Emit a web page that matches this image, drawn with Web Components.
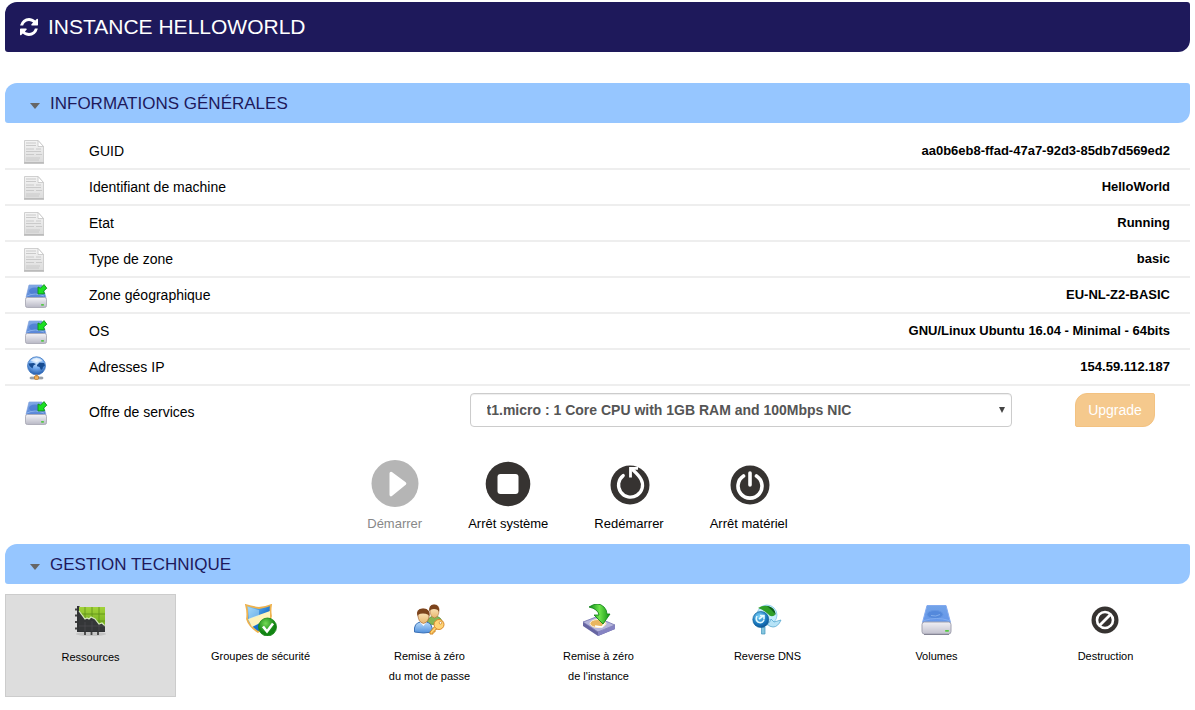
<!DOCTYPE html>
<html lang="fr">
<head>
<meta charset="utf-8">
<title>Instance HelloWorld</title>
<style>
  body {
    margin: 2px 5px 0;
    background: #fff;
    color: #000;
    font-family: "Liberation Sans", Arial, sans-serif;
    font-size: 14px;
  }
</style>
</head>
<body>

<instance-header>INSTANCE HELLOWORLD</instance-header>

<panel-section heading="INFORMATIONS GÉNÉRALES">
  <info-table></info-table>
  <service-offer></service-offer>
  <action-bar>
    <action-button icon="play" disabled>Démarrer</action-button>
    <action-button icon="stop">Arrêt système</action-button>
    <action-button icon="restart">Redémarrer</action-button>
    <action-button icon="power">Arrêt matériel</action-button>
  </action-bar>
</panel-section>

<panel-section heading="GESTION TECHNIQUE">
  <tool-bar>
    <tool-link icon="chart" selected>Ressources</tool-link>
    <tool-link icon="shield">Groupes de sécurité</tool-link>
    <tool-link icon="users">Remise à zéro<br>du mot de passe</tool-link>
    <tool-link icon="reset">Remise à zéro<br>de l'instance</tool-link>
    <tool-link icon="dns">Reverse DNS</tool-link>
    <tool-link icon="volume">Volumes</tool-link>
    <tool-link icon="ban">Destruction</tool-link>
  </tool-bar>
</panel-section>

<script>
// each icon: [width, height, viewBox, markup]
const ICONS = {
  refresh: [18, 18, "0 0 1536 1536", `
    <path fill="#fff" d="M1511 928q0 5-1 7-64 268-268 434.5t-478 166.5q-146 0-282.5-55t-243.5-157l-129 129q-19 19-45 19t-45-19-19-45v-448q0-26 19-45t45-19h448q26 0 45 19t19 45-19 45l-137 137q71 66 161 102t187 36q134 0 250-65t186-179q11-17 53-117 8-23 30-23h192q13 0 22.5 9.5t9.5 22.5zm25-800v448q0 26-19 45t-45 19h-448q-26 0-45-19t-19-45 19-45l138-138q-148-137-349-137-134 0-250 65t-186 179q-11 17-53 117-8 23-30 23h-199q-13 0-22.5-9.5t-9.5-22.5v-7q65-268 270-434.5t480-166.5q146 0 284 55.5t245 156.5l130-129q19-19 45-19t45 19 19 45z"/>`],

  doc: [24, 24, "0 0 24 24", `
    <linearGradient id="a" x2="0" y2="1"><stop stop-color="#f4f4f4"/><stop offset="1" stop-color="#dcdcdc"/></linearGradient>
    <path d="M.5.500H14l5.500 6V22.500H.5z" fill="url(#a)" stroke="#d0d0d0"/>
    <path d="M0 23h20" stroke="#b4b4b4" stroke-width="1.500"/>
    <path d="M14 .5v6h5.500z" fill="#fff" stroke="#c4c4c4" stroke-width=".8"/>
    <path d="M2 3h10M2 5.500h10M2 9h8M12 9h5M2 11.500h15M2 14.500h8M12 14.500h6M2 18h14M2 20h13" stroke="#cacaca" stroke-width="1.200"/>`],

  drive: [24, 24, "0 0 24 24", `
    <linearGradient id="a" x2="0" y2="1"><stop stop-color="#82aae6"/><stop offset="1" stop-color="#5785d6"/></linearGradient>
    <linearGradient id="b" x2="0" y2="1"><stop stop-color="#f4f4f8"/><stop offset="1" stop-color="#b8b8c5"/></linearGradient>
    <path d="M5 1h13l4 12.500H2z" fill="url(#a)" stroke="#7fa0dc" stroke-width=".7"/>
    <ellipse cx="11" cy="7" rx="6" ry="3.500" fill="#4478cf" opacity=".7"/>
    <path d="M3 12q8-4 17 0" stroke="#8bb4ed" fill="none"/>
    <rect x="1.500" y="13.500" width="21" height="10" rx="1.800" fill="url(#b)" stroke="#a3a3b0" stroke-width=".8"/>
    <rect x="17" y="20" width="3" height="1.800" rx=".8" fill="#55c848"/>
    <path d="M14 3l2.500 1.200L20 .6l2.800 3.600-3.300 3 1.200 2.500-6.700.300z" fill="#1be022" stroke="#109318" stroke-width=".9" stroke-linejoin="round"/>`],

  globe: [24, 24, "0 0 24 24", `
    <radialGradient id="a" cx=".5" cy=".25" r=".8"><stop stop-color="#e3f2ff"/><stop offset=".5" stop-color="#71aaef"/><stop offset="1" stop-color="#174d9e"/></radialGradient>
    <circle cx="12.500" cy="9.800" r="9" fill="url(#a)" stroke="#3c75c0" stroke-width=".8"/>
    <path d="M4.500 7.500l5-.5 2.500 1-2.500 1.500-1 3-3-2.500zM13 9l2.500-2.500 4.500.5 1 2.500-2 1.500-.5 2-1.500 1-1.500-3-2.500-.8z" fill="#174c92"/>
    <path d="M6.500 4.500q6-5 12 0-6 2.500-12 0" fill="#fff" opacity=".6"/>
    <path d="M12.500 18.500v3" stroke="#b28763" stroke-width="2"/>
    <rect x="6" y="21" width="13" height="2" rx="1" fill="#a6adb6" stroke="#7a828c" stroke-width=".6"/>
    <rect x="10.500" y="19.800" width="4" height="3.600" rx="1" fill="#f2b259" stroke="#b86e20" stroke-width=".7"/>`],

  play: [48, 48, "0 0 48 48", `
    <circle cx="24" cy="23.500" r="23.500" fill="#b5b5b5"/>
    <path d="M20 13.200L33.800 23.500 20 34.800z" fill="#fff" stroke="#fff" stroke-width="3" stroke-linejoin="round"/>`],

  stop: [48, 48, "0 0 48 48", `
    <circle cx="24" cy="24" r="22.300" fill="#363331"/>
    <rect x="13.500" y="14" width="21" height="20" rx="3" fill="#fff"/>`],

  restart: [48, 48, "0 0 48 48", `
    <circle cx="25" cy="25" r="19.500" fill="#363331"/>
    <path d="M18.200 15.600A12 12 0 1 0 36 19.200Q34 15.500 28 10" fill="none" stroke="#fff" stroke-width="3.300" stroke-linecap="round"/>
    <path d="M25.500 17.500V8.300H33" fill="none" stroke="#fff" stroke-width="2.800"/>`],

  power: [48, 48, "0 0 48 48", `
    <circle cx="25" cy="25" r="19.500" fill="#363331"/>
    <path d="M18.500 16A12 12 0 1 0 31.500 16M25 13v12" fill="none" stroke="#fff" stroke-width="3.600" stroke-linecap="round"/>`],

  chart: [32, 32, "0 0 32 32", `
    <linearGradient id="a" x2="0" y2="1"><stop stop-color="#a2d33a"/><stop offset="1" stop-color="#67a315"/></linearGradient>
    <ellipse cx="16" cy="29" rx="15" ry="2" fill="#c4c4c4"/>
    <path d="M0 4.500h4M0 10.500h4M0 17h4M0 23.500h4M10 27v3M16.500 27v3M23 27v3" stroke="#444" stroke-width="1.800"/>
    <path d="M2 1h2l1 1h25v25H2z" fill="#303234"/>
    <path d="M4 2h26v24H4z" fill="url(#a)"/>
    <path d="M10 2v24M17 2v24M24 2v24M4 9h26M4 16h26" stroke="#5d8f18" stroke-width=".8"/>
    <path d="M4 6l6 8 2-1 2 1 2-2 4 2 4 5 3-1 3 3v5H4z" fill="#343638"/>
    <path d="M4 6l6 8 2-1 2 1 2-2 4 2 4 5 3-1 3 3" fill="none" stroke="#d5e9bd" stroke-width="1.200"/>
    <path d="M10 17v9M17 16v10M24 20v6M4 21h26" stroke="#505254" stroke-width=".6"/>`],

  shield: [32, 32, "0 0 32 32", `
    <linearGradient id="a" x2="1" y2="1"><stop stop-color="#8fd2fc"/><stop offset=".6" stop-color="#1771cd"/></linearGradient>
    <radialGradient id="b" cx=".4" cy=".3"><stop stop-color="#75da55"/><stop offset="1" stop-color="#118413"/></radialGradient>
    <path d="M1 1q6 2 13 3Q21 3 26 1q-1 6 0 11Q24 24 13 28 4 22 2 15 3 8 1 1z" fill="url(#a)" stroke="#eeb24e" stroke-width="1.800"/>
    <path d="M3 15L25 7v7L7 23z" fill="#fff3ba"/>
    <path d="M3 3q7 2 11 3v6L4 15z" fill="#c8edff" opacity=".45"/>
    <circle cx="22.500" cy="23" r="9" fill="url(#b)" stroke="#168714" stroke-width=".8"/>
    <path d="M18 22.500l4 5 6-8" fill="none" stroke="#fff" stroke-width="2.600"/>`],

  users: [32, 32, "0 0 32 32", `
    <linearGradient id="a" x2="0" y2="1"><stop stop-color="#fff0cf"/><stop offset="1" stop-color="#e8b66d"/></linearGradient>
    <linearGradient id="b" x2="0" y2="1"><stop stop-color="#b9dcfb"/><stop offset="1" stop-color="#5190dc"/></linearGradient>
    <path d="M13 20q0-7 7-8 8 0 9 9z" fill="#86b554" stroke="#51862c" stroke-width=".8"/>
    <path d="M16 6q0-5 4.500-5T25 6q0 7-4.500 8Q16 13 16 6z" fill="url(#a)" stroke="#a96c37" stroke-width=".6"/>
    <path d="M15.500 8Q14 .5 20 .5T25 8q-1-3-5-3t-4.500 3z" fill="#7b431c"/>
    <path d="M.500 28q-1-9 6-10h6q6 1 6 10-9 2-18 0z" fill="url(#b)" stroke="#3d72b6"/>
    <path d="M6 18l3.500 4 3-4z" fill="#fff"/>
    <path d="M4 11q0-6 5.500-6T15 11q0 7-5.500 8.500Q4 18 4 11z" fill="url(#a)" stroke="#a96c37" stroke-width=".7"/>
    <path d="M3.500 13Q1 4.500 9 4.500T15.500 13Q15 9.500 9 9.500T3.500 13z" fill="#7b431c"/>
    <path d="M21 22l-5 6v2h3v-2h2v-2l4-2" fill="#ffd16f" stroke="#d28725"/>
    <circle cx="25" cy="20.500" r="5" fill="#ffd475" stroke="#d9882b"/>
    <circle cx="26.500" cy="18.800" r="1.300" fill="#fff" stroke="#c47a20" stroke-width=".7"/>`],

  reset: [32, 32, "0 0 32 32", `
    <linearGradient id="a" x2="1"><stop stop-color="#0c8c17"/><stop offset=".5" stop-color="#6de34b"/><stop offset="1" stop-color="#119113"/></linearGradient>
    <path d="M0 18v4l15 10 17-7v-4L18 28z" fill="#6665a2"/>
    <path d="M0 18l13-5 19 8-17 7z" fill="#b5b5dc" stroke="#7373ad" stroke-width=".8"/>
    <path d="M15 28v4l17-7v-4z" fill="#8583c2"/>
    <ellipse cx="15" cy="19.500" rx="8" ry="4" fill="#e9b65f" stroke="#fff0cc"/>
    <path d="M12 22l7 1 3-4" fill="none" stroke="#fff" stroke-width="1.500"/>
    <path d="M6 3Q15-3 21 3q3 3 3 7h3l-7 10-9-9h5Q15 5 6 3z" fill="url(#a)" stroke="#087d10" stroke-width=".8"/>`],

  dns: [32, 32, "0 0 32 32", `
    <radialGradient id="a" cx=".4" cy=".3" r=".8"><stop stop-color="#7dd4fb"/><stop offset=".6" stop-color="#1978be"/><stop offset="1" stop-color="#07498a"/></radialGradient>
    <circle cx="15" cy="11" r="10" fill="#c5edfd" stroke="#74bfe4" stroke-width=".7"/>
    <path d="M6 4q5-3 10-2 7 2 7 9-4 3-7-1-4-4-10-6z" fill="#2f9f28"/>
    <path d="M15 2q8 1 9 9-4-5-9-9z" fill="#0c5f1d"/>
    <path d="M15 20q3-1 4-5l3 3 7-2q-3 7-8 7-3 0-6-3z" fill="#b6e3f7" stroke="#58a8d0" stroke-width=".8"/>
    <path d="M9.500 23h3.500v7H9.500z" fill="#86c6df" stroke="#4094bb" stroke-width=".7"/>
    <circle cx="8.800" cy="15.500" r="8" fill="url(#a)" stroke="#136298" stroke-width=".7"/>
    <path d="M5 12q-2 4 1 6 4 2 6-2M7 15l4-3M8 11.500h4v4" fill="none" stroke="#e3faff" stroke-width="1.600"/>`],

  volume: [32, 32, "0 0 32 32", `
    <linearGradient id="a" x2="0" y2="1"><stop stop-color="#72a3e8"/><stop offset="1" stop-color="#6596ea"/></linearGradient>
    <linearGradient id="b" x2="0" y2="1"><stop stop-color="#f1f0f5"/><stop offset="1" stop-color="#c1c0cd"/></linearGradient>
    <path d="M6 1.500h19l4.500 17H1.500z" fill="url(#a)" stroke="#83aaf0"/>
    <ellipse cx="14" cy="10.500" rx="8" ry="4" fill="#5489dc" stroke="#6496e2"/>
    <path d="M10 11.500q5 1.500 9-1" stroke="#82adeb" fill="none"/>
    <path d="M3 16.500q13-4 25 0" stroke="#82aef0" fill="none"/>
    <rect x="1" y="18" width="29" height="12" rx="2.500" fill="url(#b)" stroke="#a2a2b0"/>
    <path d="M3 30.500h25" stroke="#858594"/>
    <rect x="24" y="26" width="4" height="1.800" rx=".8" fill="#55ca42"/>`],

  ban: [32, 32, "0 0 32 32", `
    <circle cx="15" cy="16" r="13.500" fill="#363331"/>
    <circle cx="15" cy="16" r="8" fill="none" stroke="#fff" stroke-width="2.600"/>
    <path d="M9.500 21.500l11-11" stroke="#fff" stroke-width="2.800"/>`]
};

class AppIcon extends HTMLElement {
  connectedCallback() {
    const shadow = this.attachShadow({ mode: "open" });
    const [width, height, viewBox, markup] = ICONS[this.getAttribute("name")];

    shadow.innerHTML = `
      <style>
        :host { display: block; flex: none; }
        svg { display: block; }
      </style>
      <svg width="${width}" height="${height}" viewBox="${viewBox}" aria-hidden="true">${markup}</svg>
    `;
  }
}
customElements.define("app-icon", AppIcon);

class InstanceHeader extends HTMLElement {
  connectedCallback() {
    const shadow = this.attachShadow({ mode: "open" });

    shadow.innerHTML = `
      <style>
        :host {
          display: flex;
          align-items: center;
          gap: 10px;
          height: 50px;
          padding: 0 15px;
          margin-bottom: 31px;
          background: #1e195b;
          border-radius: 12px 3px 12px 3px;
          color: #fff;
        }
        button { padding: 0; border: 0; background: none; cursor: pointer; }
        h1 { margin: 0; font-size: 21px; font-weight: normal; line-height: 24px; }
      </style>
      <button type="button" aria-label="Actualiser"><app-icon name="refresh"></app-icon></button>
      <h1><slot></slot></h1>
    `;
  }
}
customElements.define("instance-header", InstanceHeader);

class PanelSection extends HTMLElement {
  connectedCallback() {
    const shadow = this.attachShadow({ mode: "open" });

    shadow.innerHTML = `
      <style>
        :host { display: block; }
        h2 { margin: 0; font-size: 17px; font-weight: normal; }
        button {
          display: flex;
          align-items: center;
          gap: 10px;
          width: 100%;
          height: 40px;
          padding: 2px 25px 0;
          border: 0;
          background: #96c6ff;
          border-radius: 12px 3px 12px 3px;
          color: #1e195b;
          font: inherit;
          text-align: left;
          cursor: pointer;
        }
        .caret {
          margin-top: 4px;
          border: 5px solid transparent;
          border-top: 6px solid #666;
          border-bottom: 0;
        }
        .content { padding-top: 10px; }
      </style>
      <h2><button type="button" aria-expanded="true"><span class="caret"></span>${this.getAttribute("heading")}</button></h2>
      <div class="content"><slot></slot></div>
    `;

    // fold / unfold the panel
    const button = shadow.querySelector("button");
    button.addEventListener("click", () => {
      const content = shadow.querySelector(".content");
      content.hidden = !content.hidden;
      button.setAttribute("aria-expanded", String(!content.hidden));
    });
  }
}
customElements.define("panel-section", PanelSection);

class InfoTable extends HTMLElement {
  connectedCallback() {
    this.render();
  }

  getRows() {
    return [
      ["doc", "GUID", "aa0b6eb8-ffad-47a7-92d3-85db7d569ed2"],
      ["doc", "Identifiant de machine", "HelloWorld"],
      ["doc", "Etat", "Running"],
      ["doc", "Type de zone", "basic"],
      ["drive", "Zone géographique", "EU-NL-Z2-BASIC"],
      ["drive", "OS", "GNU/Linux Ubuntu 16.04 - Minimal - 64bits"],
      ["globe", "Adresses IP", "154.59.112.187"]
    ];
  }

  render() {
    const shadow = this.attachShadow({ mode: "open" });

    shadow.innerHTML = `
      <style>
        :host { display: block; padding-top: 1px; }
        table { width: 100%; border-collapse: separate; border-spacing: 0; }
        th, td { height: 34px; padding: 0; border-bottom: 2px solid #eee; }
        .icon { width: 65px; height: 32px; padding: 2px 0 0 19px; }
        th { font-size: 14px; font-weight: normal; text-align: left; }
        .value { height: 32px; padding: 0 20px 2px 0; font-size: 13px; font-weight: bold; text-align: right; }
      </style>
      <table>
        ${this.getRows().map(([icon, label, value]) => `
          <tr>
            <td class="icon"><app-icon name="${icon}"></app-icon></td>
            <th scope="row">${label}</th>
            <td class="value">${value}</td>
          </tr>`).join("")}
      </table>
    `;
  }
}
customElements.define("info-table", InfoTable);

class ServiceOffer extends HTMLElement {
  connectedCallback() {
    const shadow = this.attachShadow({ mode: "open" });

    shadow.innerHTML = `
      <style>
        :host {
          display: grid;
          grid-template-columns: 56px 13fr 20fr 150px;
          column-gap: 28px;
          align-items: center;
          padding: 7px 0 8px;
        }
        app-icon { padding: 6px 0 0 19px; }
        label { padding-top: 4px; }
        .select { position: relative; }
        select {
          appearance: none;
          display: block;
          width: 100%;
          height: 34px;
          padding: 0 16px;
          border: 1px solid #ccc;
          border-radius: 4px;
          background: #fff;
          box-shadow: inset 0 1px 1px rgba(0, 0, 0, .07);
          color: #555;
          font: bold 14px "Liberation Sans", Arial, sans-serif;
        }
        .arrow {
          position: absolute;
          top: 14px;
          right: 7px;
          border: 3px solid transparent;
          border-top: 6px solid #444;
          border-bottom: 0;
          pointer-events: none;
        }
        button {
          justify-self: center;
          height: 34px;
          padding: 0 12px;
          border: 1px solid #f3c281;
          border-radius: 12px 2px 12px 2px;
          background: #f5c98d;
          color: #fff;
          font: 14px "Liberation Sans", Arial, sans-serif;
        }
      </style>
      <app-icon name="drive"></app-icon>
      <label for="offer">Offre de services</label>
      <div class="select">
        <select id="offer">
          <option>t1.micro : 1 Core CPU with 1GB RAM and 100Mbps NIC</option>
        </select>
        <span class="arrow"></span>
      </div>
      <button type="button" disabled>Upgrade</button>
    `;
  }
}
customElements.define("service-offer", ServiceOffer);

class ActionBar extends HTMLElement {
  connectedCallback() {
    const shadow = this.attachShadow({ mode: "open" });

    shadow.innerHTML = `
      <style>
        :host {
          display: flex;
          justify-content: center;
          gap: 46px;
          padding: 25px 40px 12px 0;
        }
      </style>
      <slot></slot>
    `;
  }
}
customElements.define("action-bar", ActionBar);

class ActionButton extends HTMLElement {
  connectedCallback() {
    const shadow = this.attachShadow({ mode: "open" });

    shadow.innerHTML = `
      <style>
        :host { display: block; }
        button {
          display: flex;
          flex-direction: column;
          align-items: center;
          gap: 8px;
          padding: 0;
          border: 0;
          background: none;
          color: #000;
          font: 13px/16px "Liberation Sans", Arial, sans-serif;
          cursor: pointer;
        }
        button:disabled { color: #888; cursor: default; }
      </style>
      <button type="button" ${this.hasAttribute("disabled") ? "disabled" : ""}>
        <app-icon name="${this.getAttribute("icon")}"></app-icon>
        <span><slot></slot></span>
      </button>
    `;
  }
}
customElements.define("action-button", ActionButton);

class ToolBar extends HTMLElement {
  connectedCallback() {
    const shadow = this.attachShadow({ mode: "open" });

    shadow.innerHTML = `
      <style>
        :host { display: flex; }
      </style>
      <slot></slot>
    `;
  }
}
customElements.define("tool-bar", ToolBar);

class ToolLink extends HTMLElement {
  connectedCallback() {
    const shadow = this.attachShadow({ mode: "open" });

    shadow.innerHTML = `
      <style>
        :host { display: block; flex: 1 1 0; }
        :host([selected]) {
          background: #ddd;
          border: 1px solid #ccc;
        }
        a {
          display: flex;
          flex-direction: column;
          align-items: center;
          gap: 10px;
          padding: 10px 0 11px;
          color: #000;
          font-size: 11px;
          line-height: 20px;
          text-align: center;
          text-decoration: none;
        }
      </style>
      <a href="#">
        <app-icon name="${this.getAttribute("icon")}"></app-icon>
        <span><slot></slot></span>
      </a>
    `;
  }
}
customElements.define("tool-link", ToolLink);
</script>
</body>
</html>
